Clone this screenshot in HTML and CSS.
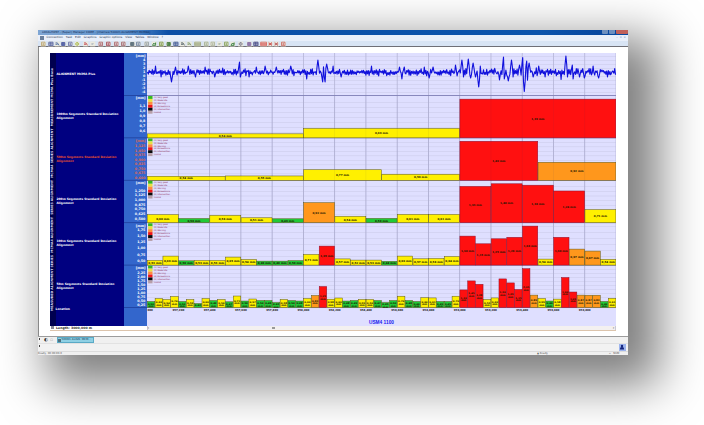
FILE: index.html
```html
<!DOCTYPE html>
<html lang="en">
<head>
<meta charset="utf-8">
<title>Project Manager</title>
<link rel="stylesheet" href="styles.css">
</head>
<body>
<div class="window">
  <header class="titlebar">
    <span class="title">LOCALHOST - (Super) Manager CORE - [ImaView 5000m ALIGNMENT MCM4A]</span>
    <span class="winbtns"><i></i><i></i><i class="close"></i></span>
  </header>
  <nav class="menubar">
    <i class="appicon"></i><span>Connection</span><span>Task</span><span>Edit</span><span>Graphics</span><span>Graphic options</span><span>View</span><span>Tables</span><span>Window</span><span>?</span>
    <span class="mdi">– ▫ ×</span>
  </nav>
  <div class="toolbar"><svg id="tools" width="260" height="6" viewBox="38 40 260 6"></svg></div>
  <main class="client">
    <div class="chart">
      <div class="strip"><span>MEASURED ALIGNMENT SERIES&nbsp; MCMA4 ALIGNMENT&nbsp; SERIES ALIGNMENT&nbsp; MCMA4 SERIES ALIGNMENT&nbsp; MEASUREMENT MCMA Plus Base</span></div>
      <div class="names">
        <div class="name first">ALIGNMENT MCMA Plus</div>
        <div class="name">1000m Segments Standard Deviation<br>Alignment</div>
        <div class="name active">500m Segments Standard Deviation<br>Alignment</div>
        <div class="name">200m Segments Standard Deviation<br>Alignment</div>
        <div class="name">100m Segments Standard Deviation<br>Alignment</div>
        <div class="name">50m Segments Standard Deviation<br>Alignment</div>
        <div class="loc">Location</div>
      </div>
      <svg id="axis" class="axis" width="22.5" height="273" viewBox="124 53 22.5 273"></svg>
      <svg id="plot" class="plot" width="469" height="273" viewBox="146.5 53 469 273"></svg>
    </div>
    <div class="foot">
      <div class="length"><i></i>Length: 3000,000 m</div>
      <div class="scroll"><b>‹</b><i></i><b>›</b></div>
    </div>
  </main>
  <div class="tabs"><i class="grip"></i><span class="nav">◐</span><span class="nav dim">▫</span><span class="tab"><i></i>5000m ALIGN. MCM...</span></div>
  <div class="command"><i class="grip"></i><span class="person"><svg width="6" height="6" viewBox="0 0 6 6"><circle cx="3" cy="1.9" r="1.2" fill="#15257e"/><path d="M1 5.4V4.3Q1.4 3.1 3 3.1T5 4.3V5.4Z" fill="#15257e"/></svg></span></div>
  <footer class="status"><span>Ready, 00:00:00.0</span><span class="ready">▲ Ready</span><span class="num">▫ &nbsp; NUM</span></footer>
</div>
<script src="chart.js"></script>
</body>
</html>
```
FILE: styles.css
```css
* { box-sizing: border-box; }
html, body { margin: 0; height: 100%; overflow: hidden; background: #fff; }
body { padding: 30px 0 0 38px; font-family: "DejaVu Sans", Verdana, sans-serif; }
.window {
  width: 590px; height: 325px; background: #fff;
  display: flex; flex-direction: column;
  box-shadow: 20px 19px 44px 11px rgba(0, 0, 0, .5);
}
.titlebar {
  height: 5px; flex: none; display: flex; justify-content: space-between;
  background: linear-gradient(90deg, #7fa6d4 0, #5a8fcb 90px, #0c4fa6 130px, #0c54ac 500px, #0848a0 560px);
}
.title { font-size: 2.8px; line-height: 5px; color: #10264e; padding-left: 4px; white-space: nowrap; }
.winbtns { display: flex; gap: 1px; height: 4px; }
.winbtns i { width: 6px; background: #6d8fbf; border-radius: 0 0 1px 1px; }
.winbtns .close { width: 12px; background: #c0605a; }
.menubar {
  height: 5.5px; flex: none; display: flex; align-items: center; gap: 3px; padding: 0 2px;
  background: #e9effa; font-size: 2.9px; line-height: 5px; color: #26324d; white-space: nowrap;
}
.appicon { width: 3.5px; height: 3.5px; background: #6a7f9c; }
.mdi { margin-left: auto; color: #5f88c0; word-spacing: 1px; }
.toolbar { height: 6.5px; flex: none; background: #d8e4f4; border-bottom: 1px solid #6f6f76; display: flex; }
.client { height: 289px; flex: none; background: #fff; padding: 6px 0 0 11px; border-left: 1px solid #888; }
.chart { display: flex; height: 273px; width: 565.5px; }
.strip {
  width: 5.5px; flex: none; background: #00004f; color: #d5d5f0;
  display: flex; align-items: center; justify-content: center;
}
.strip span {
  writing-mode: vertical-rl; transform: rotate(180deg); white-space: nowrap;
  font-size: 3.2px; line-height: 5px; font-weight: bold;
}
.names { width: 68.5px; flex: none; background: #000080; color: #fff; display: grid; grid-template-rows: repeat(6, 42.4px) 1fr; }
.name { font-size: 2.95px; line-height: 4px; font-weight: bold; padding: 16.8px 0 0 1px; white-space: nowrap; }
.name.first { padding-top: 18.8px; }
.name.active { color: #e8502c; }
.loc { font-size: 3px; line-height: 4px; font-weight: bold; }
.axis, .plot { flex: none; display: block; }
.foot { display: flex; height: 4.5px; width: 565.5px; border-bottom: 1px solid #dcc4ac; }
.length { width: 96.5px; font-size: 3.2px; line-height: 4px; font-weight: bold; color: #222; display: flex; gap: 2px; align-items: center; }
.length i { width: 3px; height: 3px; background: #889; margin-left: 1px; }
.scroll { flex: 1; background: #f3f0f0; border-left: 1px solid #ccc8d2; border-right: 1px solid #ccc8d2; display: flex; align-items: center; justify-content: space-between; font-size: 4px; line-height: 3px; color: #555; }
.scroll i { width: 3px; height: 1.5px; background: #999; margin-right: 215px; }
.tabs { height: 8px; flex: none; background: #f0f0f0; border-top: 1px solid #9c9c9c; border-bottom: 1px solid #e2e2e2; display: flex; align-items: center; font-size: 4.5px; line-height: 6px; }
.grip { width: 1px; height: 2px; background: #444; align-self: flex-start; margin: 1px 4px 0 1px; }
.nav { width: 6px; color: #333; }
.nav.dim { color: #aaa; }
.tab { width: 37px; height: 5.5px; background: #8fd0e4; border: 1px solid #5aaac6; font-size: 2.7px; line-height: 3.5px; color: #0b3c5a; margin-left: .5px; white-space: nowrap; display: flex; align-items: center; gap: 1px; }
.tab i { width: 3px; height: 3px; background: #51707e; flex: none; }
.command { height: 7.5px; flex: none; background: #f2f2f2; border-bottom: 1px solid #dcdcdc; display: flex; justify-content: space-between; }
.person { width: 7px; height: 6.5px; background: #9db4ee; margin-right: 2px; display: flex; }
.status { flex: 1; background: #f0f0f0; display: flex; font-size: 2.6px; line-height: 3.6px; color: #555; white-space: nowrap; }
.ready { margin-left: auto; width: 72px; }
.num { width: 19px; }
.lab { font-weight: bold; font-size: 2.7px; text-anchor: middle; fill: #1c1700; }
.lab.small { font-size: 2.5px; }
.tick { font-weight: bold; font-size: 3.3px; text-anchor: end; fill: #fff; }
.tick.hot { fill: #e0684c; }
.place { font-weight: bold; font-size: 2.6px; text-anchor: middle; fill: #222; }
.leg { font-size: 2.1px; fill: #8a2856; }
.line { font: bold 4.8px "Liberation Sans", Arial, sans-serif; text-anchor: middle; fill: #1818ee; }
```
FILE: chart.js
```js
const NS = 'http://www.w3.org/2000/svg';
const plot = document.getElementById('plot');
const axis = document.getElementById('axis');
const tools = document.getElementById('tools');

function add(parent, tag, attrs, text) {
  const el = document.createElementNS(NS, tag);
  for (const k in attrs) el.setAttribute(k, attrs[k]);
  if (text !== undefined) el.textContent = text;
  parent.appendChild(el);
  return el;
}

const X0 = 146.6, W = 468.9, TOP = 53, ROW = 42.42;
const bottom = r => TOP + ROW * (r + 1);
const COLORS = { g: '#1fc936', y: '#fff000', o: '#ff971c', r: '#ff1010' };

/* Axis labels: [values, y positions] for each row */
const ticks = [
  [['4', '3', '2', '1', '0', '-1', '-2', '-3', '-4'], [60, 64, 68, 72, 76, 80, 84, 88, 92]],
  [['1,1', '1,0', '0,9', '0,8', '0,7', '0,6'], [106, 111, 116, 121, 126, 131]],
  [['1,125', '1,050', '0,975', '0,900', '0,825', '0,750', '0,675', '0,600'], [146, 150.5, 155, 159.3, 164, 168.5, 173, 177.5]],
  [['1,250', '1,125', '1,000', '0,875', '0,750', '0,625', '0,500'], [190.3, 195, 199.7, 204.4, 209.1, 213.8, 218.4]],
  [['1,75', '1,50', '1,25', '1,00', '0,75', '0,50'], [230, 236, 242, 248.2, 254.6, 261]],
  [['2,25', '2,00', '1,75', '1,50', '1,25', '1,00', '0,75', '0,50', '0,25'], [273, 277, 281, 285, 289, 293, 297, 301, 305]]
];

add(plot, 'rect', { x: 146, y: 53, width: 470, height: 273, fill: '#dfdfff' });
add(axis, 'rect', { x: 124, y: 53, width: 23, height: 273, fill: '#3366cc' });

ticks.forEach(([names, ys], r) => {
  const hot = r === 2 ? ' hot' : '';
  add(axis, 'text', { x: 145.6, y: TOP + ROW * r + 3.9, class: 'tick' + hot }, '[mm]');
  names.forEach((n, i) => add(axis, 'text', { x: 145.3, y: ys[i] + 1.2, class: 'tick' + hot }, n));
  for (let y = ys[0] - 4; y < bottom(r) - 1; y += (ys[1] - ys[0]))
    add(plot, 'rect', { x: X0, y: y, width: W, height: .6, fill: '#cdcdec' });
});
for (let i = 1; i <= 15; i++)
  add(plot, 'rect', { x: X0 + W * i / 15 - .4, y: 53, width: .8, height: 254.5, fill: '#b4b4d6' });
for (let r = 0; r < 6; r++) {
  add(plot, 'rect', { x: X0, y: bottom(r) - .4, width: W, height: .9, fill: '#7f7fb6' });
  add(axis, 'rect', { x: 124, y: bottom(r) - .4, width: 23, height: .8, fill: '#1f3f9c' });
}

/* Bars: colour, height, value */
const rows = {
  1: 'y4:0,54 y9.4:0,69 r38.7:1,39',
  2: 'y4:0,54 y4.3:0,55 y10.5:0,77 y6:0,59 r39:1,40 o18:0,92',
  3: 'y8:0,60 g4.2:0,50 y7.3:0,58 y4.9:0,51 g3.9:0,49 o20:0,92 y6.3:0,54 g4.3:0,50 y8.2:0,61 y8.2:0,61 r36.3:1,33 r38.9:1,40 r37.5:1,38 r31.7:1,24 y13:0,71',
  4: 'y4.7:0,53 y9:0,69 g4.3:0,50 y4.6:0,53 y4.6:0,53 y8:0,65 y5.6:0,54 g4:0,46 g4:0,48 g4.5:0,50 y10.6:0,71 r19:1,05 y6.2:0,57 y5:0,52 y5:0,53 g3.8:0,44 y9:0,66 y6.3:0,57 y6.6:0,58 y8.5:0,64 r29:1,30 r21.3:1,15 r26.3:1,25 r27.8:1,28 r39:1,68 y6:0,54 r27.8:1,30 o16:0,97 o14:0,87 y5.7:0,54',
  5: 'g6:0,50 y9:0,60 y8:0,54 y11:0,74 g6:0,50 y8:0,59 g4:0,42 y9:0,60 g7:0,49 y8:0,56 g5.7:0,47 y11.5:0,71 g6.5:0,50 y8.5:0,57 g7:0,50 g7:0,48 g5:0,42 y8:0,58 g7:0,50 g6.5:0,48 y9:0,60 o12:0,83 r21:1,25 y8.3:0,58 y9.5:0,60 g6.5:0,48 g7:0,49 y8:0,55 y8:0,56 g7:0,47 g5:0,45 g7:0,50 y11.3:0,70 g7:0,48 g6:0,46 y9.8:0,60 y9.6:0,61 g6:0,45 g6:0,45 y11.3:0,70 r17.6:1,10 r26.6:1,45 r23.2:1,38 y8:0,55 y9.6:0,60 r28.6:1,50 r24.6:1,39 r18:1,15 r38.8:2,05 o12.4:0,85 y9:0,59 g6.5:0,46 y8.4:0,58 r30:1,60 r15.5:1,05 o12.4:0,87 o12.3:0,87 o12.3:0,83 g6:0,46 y9.2:0,61'
};

for (const r in rows) {
  const bars = rows[r].split(' ');
  const w = W / bars.length, base = bottom(+r);
  bars.forEach((b, i) => {
    const [spec, value] = b.split(':');
    const h = +spec.slice(1), x = X0 + i * w;
    add(plot, 'rect', {
      x: x + .2, y: base - h, width: w - .3, height: h, fill: COLORS[spec[0]],
      stroke: spec[0] === 'r' ? '#8c1030' : '#5f5a18', 'stroke-width': .5
    });
    if (bars.length === 60) {
      const mid = Math.max(base - h / 2, base - h + 2.6);
      add(plot, 'text', { x: x + w / 2, y: mid, class: 'lab small' }, value);
      if (h > 4.5) add(plot, 'text', { x: x + w / 2, y: mid + 2.7, class: 'lab small' }, 'mm');
    } else {
      add(plot, 'text', { x: x + w / 2, y: base - h / 2 + 1.1, class: 'lab' }, value + ' mm');
    }
  });
}
for (let i = 1; i < 15; i++)
  add(plot, 'rect', { x: X0 + W * i / 15 - .3, y: 96, width: .6, height: 211, fill: '#303060', 'fill-opacity': .1 });

/* Legend of each bar row */
const legend = [
  ['#35b91e', '(1) Very good'], ['#e9e040', '(2) Moderate'], ['#ff8c3c', '(3) Warning'],
  ['#f01818', '(4) Exceedance'], ['#0b0b0b', '(5) Intervention'], ['#b79fa8', 'Invalid']
];
for (let r = 1; r < 6; r++)
  legend.forEach(([c, t], i) => {
    const y = TOP + ROW * r + .6 + i * 2.95;
    add(plot, 'rect', { x: 147.6, y: y, width: 4.4, height: 2.9, fill: c });
    add(plot, 'text', { x: 153.3, y: y + 2.2, class: 'leg' }, t);
  });

/* Alignment signal: short-wave noise with peaks at [x, y] */
const peaks = [[155, 66], [161, 77], [171.4, 82], [175, 67], [188, 66], [195, 77], [205, 67], [214, 77], [222, 68], [239, 62],
  [240, 77], [249, 77], [256, 67], [265, 66], [276, 67], [290, 66], [306, 79], [317.7, 60], [322.3, 82], [323.8, 61], [324.8, 82],
  [326, 64], [333, 66], [341, 77], [371, 66], [378, 76], [399, 67], [401.5, 79], [404, 67], [424, 67], [428.5, 78], [433, 67],
  [455.3, 65], [457, 76], [461.3, 60], [463, 77], [468.2, 59], [470, 78], [473, 63], [475, 77], [478, 87], [480, 66], [499, 80],
  [502.7, 57], [503.8, 79], [507.5, 81], [511.3, 60], [513, 77], [519, 65], [522.6, 57.5], [523.8, 91.5], [526.3, 61], [528, 88],
  [529, 63], [533, 77], [538, 66], [545, 77], [561, 79.5], [565.8, 56], [567, 77], [572, 65], [573, 79], [579, 77], [584, 78],
  [593, 66], [598, 78], [607, 77]];
let seed = 71;
const rnd = () => (seed = (seed * 16807) % 2147483647) / 2147483647;
let pts = [], n = 0;
for (let x = 147; x < 615.4; x += .8, n++) {
  const amp = x > 450 && x < 540 ? 3.8 : x > 540 ? 3.1 : 2.6;
  let y = 72.3 + (n % 2 ? 1 : -1) * rnd() * amp + (rnd() - .5) * amp * .9;
  for (const p of peaks) {
    const d = Math.abs(p[0] - x);
    if (d <= .4) y = p[1];
    else if (d <= 1.2 && Math.abs(p[1] - 72.3) > 8) y = 72.3 + (p[1] - 72.3) * .5;
  }
  pts.push(x.toFixed(1) + ',' + y.toFixed(1));
}
add(plot, 'polyline', { points: pts.join(' '), fill: 'none', stroke: '#1010dc', 'stroke-width': 1.1, 'stroke-linejoin': 'round' });

/* Location scale */
for (let i = 0; i < 15; i++) {
  const m = 957000 + i * 200;
  const label = Math.floor(m / 1000) + ',' + String(m % 1000).padStart(3, '0');
  add(plot, 'text', { x: i ? X0 + W * i / 15 : 149.6, y: 311.2, class: 'place' }, i ? label : '000');
}
add(plot, 'text', { x: 381, y: 324, class: 'line' }, 'USM4 1100');

/* Toolbar buttons: x, shape, colour */
const buttons = [
  [41, 'box', '#b8a06a'], [48.5, 'grid', '#44549c'], [55, 'arrow', '#355a9a'], [61, 'disk', '#36479c'], [68, 'box', '#5a66a8'],
  [75, 'dot', '#9aae22'], [83.5, 'arrow', '#c03a48'], [90.5, 'bar', '#8c98ae'], [98.5, 'box', '#a65a68'], [106, 'box', '#a03c50'],
  [114, 'box', '#a65a68'], [121, 'box', '#9a5a68'], [130, 'disk', '#445a6a'], [136, 'box', '#64789a'], [144.5, 'box', '#8c98a0'],
  [152, 'hill', '#2f7c38'], [159, 'box', '#74923c'], [166.5, 'disk', '#2f6c2a'], [173.5, 'grid', '#2c4a94'], [180.5, 'arrow', '#3b4c58'],
  [187, 'arrow', '#6a8a5a'], [194.5, 'wide', '#9aa67c'], [204, 'box', '#9cab90'], [210.5, 'box', '#a6ae96'], [217.5, 'bar', '#7c9484'],
  [224, 'box', '#7c9c50'], [230.5, 'hill', '#2b7634'], [238.5, 'dot', '#5a5c76'], [247, 'disk', '#7a5a9c'], [253.5, 'grid', '#2c3380'],
  [260.5, 'wide', '#d8605c'], [268, 'cross', '#c83c3c'], [274, 'cross', '#b84c50'], [281, 'box', '#c8605c']
];
const shapes = {
  box: 'M.5 .5H4V4H.5ZM1.5 2H3M1.5 3H3', grid: 'M.3 .5H4.5V4H.3ZM.3 2.2H4.5M2.3 .5V4', arrow: 'M.5 1.2H2.4L4 3.7M.5 2.6H2.6',
  disk: 'M.6 .8H3.8V3.8H.6ZM1 1.8H3.6M1 2.8H3.6', dot: 'M2.2 .8A1.4 1.4 0 1 1 2.1 .8M2.2 1.6V2.8', bar: 'M1.6 1.4V3.2M2.4 2H3',
  hill: 'M.4 3.7L1.8 1.4L2.8 2.6L3.6 1V3.7Z', wide: 'M.2 .5H6V4H.2ZM.2 1.7H6M.2 2.9H6', cross: 'M.6 .7L4 3.9M4 .7L.6 3.9M.5 2.3H4.2'
};
buttons.forEach(([x, s, c]) => {
  add(tools, 'rect', { x: x - .4, y: 40.5, width: s === 'wide' ? 7 : 5.2, height: 5, fill: '#f1ecd8', 'fill-opacity': .75 });
  add(tools, 'path', { d: shapes[s], transform: `translate(${x} 40.7)`, fill: 'none', stroke: c, 'stroke-width': .8 });
});
```
